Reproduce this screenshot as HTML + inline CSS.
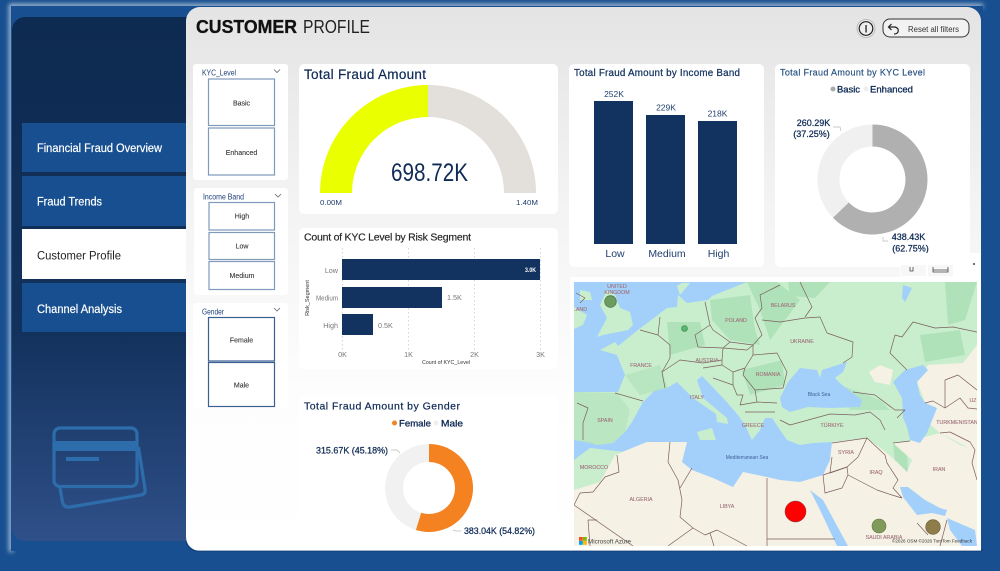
<!DOCTYPE html>
<html><head><meta charset="utf-8"><title>Customer Profile</title>
<style>html,body{margin:0;padding:0;background:#174f90;width:1000px;height:571px;overflow:hidden}svg{display:block}text{font-family:"Liberation Sans",sans-serif}</style></head>
<body>
<svg xmlns="http://www.w3.org/2000/svg" width="1000" height="571" viewBox="0 0 1000 571">
<defs>
<linearGradient id="side" x1="0" y1="0" x2="0" y2="1"><stop offset="0" stop-color="#0d2a50"/><stop offset=".6" stop-color="#12315c"/><stop offset="1" stop-color="#2f5089"/></linearGradient>
<linearGradient id="pan" x1="0" y1="0" x2="0" y2="1"><stop offset="0" stop-color="#e4e4e4"/><stop offset=".35" stop-color="#f3f3f3"/><stop offset=".7" stop-color="#fdfdfd"/><stop offset="1" stop-color="#fff"/></linearGradient>
<filter id="blur" x="-5%" y="-5%" width="110%" height="110%"><feGaussianBlur stdDeviation="2.500"/></filter>
<clipPath id="mc"><rect x="574" y="282" width="403" height="264"/></clipPath>
</defs>
<rect width="1000" height="571" fill="#174f90"/>
<path d="M11 552 V6 H983" fill="none" stroke="#b9c9dd" stroke-width="4" filter="url(#blur)"/>
<path d="M11 551.500 H983" fill="none" stroke="#c6d3e3" stroke-width="3" filter="url(#blur)"/>
<rect x="11" y="6" width="972" height="545" fill="#174f90"/>
<rect x="12" y="17" width="190" height="524" rx="13" fill="url(#side)"/>

<!-- nav -->
<rect x="22" y="123" width="165" height="49" fill="#174f90"/>
<rect x="22" y="176" width="165" height="50" fill="#174f90"/>
<rect x="22" y="229" width="165" height="50" fill="#fff"/>
<rect x="22" y="283" width="165" height="49" fill="#174f90"/>
<g font-size="11.500" fill="#fff" stroke="#fff" stroke-width=".2">
<text x="37" y="152" textLength="125" lengthAdjust="spacingAndGlyphs">Financial Fraud Overview</text>
<text x="37" y="205.500" textLength="65" lengthAdjust="spacingAndGlyphs">Fraud Trends</text>
<text x="37" y="313" textLength="85" lengthAdjust="spacingAndGlyphs">Channel Analysis</text>
</g>
<text x="37" y="259.500" font-size="11.500" fill="#222" textLength="84" lengthAdjust="spacingAndGlyphs">Customer Profile</text>

<!-- card icon -->
<g fill="none" stroke="#2e6dab" stroke-width="3.200">
<rect x="54" y="428" width="83" height="58.500" rx="6"/>
<path d="M60 488 L62.500 502 Q64 508 70 507 L141 495 Q146 494 145 489 L138.500 447"/>
</g>
<rect x="54" y="441" width="83" height="10" fill="#2e6dab"/>
<rect x="66" y="457" width="33" height="4" fill="#2e6dab"/>

<!-- main panel -->
<rect x="186" y="7" width="795" height="544" rx="14" fill="url(#pan)"/>
<text x="196" y="33" font-size="18" font-weight="700" fill="#111" stroke="#111" stroke-width=".3" textLength="101" lengthAdjust="spacingAndGlyphs">CUSTOMER</text>
<text x="303" y="33" font-size="18" fill="#222" textLength="67" lengthAdjust="spacingAndGlyphs">PROFILE</text>
<circle cx="866" cy="28.500" r="9" fill="#eee" stroke="#bbb" stroke-width="1"/>
<circle cx="866" cy="28.500" r="6.800" fill="none" stroke="#222" stroke-width="1.200"/>
<rect x="865.400" y="25" width="1.300" height="7.500" fill="#222"/>
<rect x="883" y="19" width="86" height="18" rx="7" fill="#f2f2f2" stroke="#333" stroke-width="1"/>
<path d="M889 27 L895 27 Q899 28 898 32 Q897 34 894 34 M891.500 24 L888.500 27 L891.500 30" fill="none" stroke="#222" stroke-width="1.200"/>
<text x="908" y="32" font-size="8" fill="#333" textLength="51" lengthAdjust="spacingAndGlyphs">Reset all filters</text>

<!-- slicers -->
<g fill="#fff">
<rect x="193" y="64" width="95" height="116" rx="3"/>
<rect x="194" y="188" width="94" height="107" rx="3"/>
<rect x="193" y="303" width="95" height="106" rx="3"/>
</g>
<g font-size="7.800" fill="#1d3f78">
<text x="202" y="75.500" textLength="34" lengthAdjust="spacingAndGlyphs">KYC_Level</text>
<text x="203" y="199.500" textLength="41" lengthAdjust="spacingAndGlyphs">Income Band</text>
<text x="202" y="314.500" textLength="22" lengthAdjust="spacingAndGlyphs">Gender</text>
</g>
<g fill="none" stroke="#667" stroke-width=".8">
<path d="M274 69.500 L277 72.500 L280 69.500"/><path d="M275 194 L278 197 L281 194"/><path d="M274 308 L277 311 L280 308"/>
</g>
<g fill="#fff" stroke="#7f9abb" stroke-width="1.200">
<rect x="208.500" y="79" width="66" height="46.500"/>
<rect x="208.500" y="128" width="66" height="47"/>
<rect x="209" y="202.500" width="65.500" height="27.500"/>
<rect x="209" y="232.500" width="65.500" height="27"/>
<rect x="209" y="261.500" width="65.500" height="28"/>
<rect x="208.500" y="317.500" width="66" height="43.500" stroke="#3b5f91"/>
<rect x="208.500" y="362.500" width="66" height="44" stroke="#3b5f91"/>
</g>
<g font-size="7" fill="#333" text-anchor="middle" stroke="#333" stroke-width=".1">
<text x="241.500" y="105.500">Basic</text>
<text x="241.500" y="155">Enhanced</text>
<text x="242" y="218.500">High</text>
<text x="242" y="248.500">Low</text>
<text x="242" y="278">Medium</text>
<text x="241.500" y="342.500">Female</text>
<text x="241.500" y="387.500">Male</text>
</g>

<!-- gauge -->
<rect x="299" y="64" width="259" height="150" rx="5" fill="#fff"/>
<text x="304" y="79" font-size="13.500" fill="#0f2a55" stroke="#0f2a55" stroke-width=".2" textLength="122" lengthAdjust="spacing">Total Fraud Amount</text>
<path d="M320 193 A108 108 0 0 1 428 85 L428 117 A76 76 0 0 0 352 193 Z" fill="#eaff00"/>
<path d="M428 85 A108 108 0 0 1 536 193 L504 193 A76 76 0 0 0 428 117 Z" fill="#e3dfda"/>
<text x="391" y="181" font-size="25" fill="#0f2a55" textLength="77" lengthAdjust="spacingAndGlyphs">698.72K</text>
<text x="320" y="205" font-size="7.500" fill="#1f3d6e" textLength="22" lengthAdjust="spacingAndGlyphs">0.00M</text>
<text x="516" y="205" font-size="7.500" fill="#1f3d6e" textLength="22" lengthAdjust="spacingAndGlyphs">1.40M</text>

<!-- risk chart -->
<rect x="299" y="228" width="259" height="141" rx="5" fill="#fff"/>
<text x="304" y="240.500" font-size="10.500" fill="#222" stroke="#222" stroke-width=".15" textLength="167" lengthAdjust="spacing">Count of KYC Level by Risk Segment</text>
<g stroke="#ccc" stroke-width=".8" stroke-dasharray="1.500 2.500"><path d="M342.500 248V350M408.500 248V350M474.500 248V350M540.500 248V350"/></g>
<g fill="#12335f">
<rect x="342" y="259" width="198" height="21"/>
<rect x="342" y="287" width="100" height="21"/>
<rect x="342" y="314" width="31" height="21"/>
</g>
<g font-size="7.200" fill="#777">
<text x="338" y="273" text-anchor="end">Low</text>
<text x="338" y="300.500" text-anchor="end" textLength="22" lengthAdjust="spacingAndGlyphs">Medium</text>
<text x="338" y="328" text-anchor="end">High</text>
<text x="447" y="300">1.5K</text>
<text x="378" y="328">0.5K</text>
<text x="342.500" y="357" text-anchor="middle">0K</text>
<text x="408.500" y="357" text-anchor="middle">1K</text>
<text x="474.500" y="357" text-anchor="middle">2K</text>
<text x="540.500" y="357" text-anchor="middle">3K</text>
</g>
<text x="525" y="272" font-size="6.500" font-weight="700" fill="#fff" textLength="11" lengthAdjust="spacingAndGlyphs">3.0K</text>
<text x="422" y="364" font-size="5.500" fill="#333" textLength="48" lengthAdjust="spacingAndGlyphs">Count of KYC_Level</text>
<text transform="translate(309 298) rotate(-90)" font-size="5.500" fill="#333" text-anchor="middle">Risk_Segment</text>

<!-- gender donut -->
<rect x="299" y="396" width="259" height="149" rx="5" fill="#fff"/>
<text x="304" y="409.500" font-size="10.500" fill="#0f2a55" stroke="#0f2a55" stroke-width=".2" textLength="156" lengthAdjust="spacing">Total Fraud Amount by Gender</text>
<circle cx="394.500" cy="423" r="2.500" fill="#f58220"/><circle cx="436" cy="423" r="2.500" fill="#efefef"/>
<text x="399" y="426.500" font-size="9.500" fill="#0f2a55" stroke="#0f2a55" stroke-width=".3" textLength="32" lengthAdjust="spacingAndGlyphs">Female</text>
<text x="441" y="426.500" font-size="9.500" fill="#0f2a55" stroke="#0f2a55" stroke-width=".3" textLength="22" lengthAdjust="spacingAndGlyphs">Male</text>
<circle cx="429" cy="488" r="35" fill="none" stroke="#f1f1f1" stroke-width="18"/>
<path d="M429 444 A44 44 0 1 1 415.900 530 L421.200 512.800 A26 26 0 1 0 429 462 Z" fill="#f58220"/>
<path d="M391 450 L397 450 L400 453 M453 530 L456 531 L461 531" fill="none" stroke="#bbb" stroke-width=".7"/>
<text x="316" y="453.500" font-size="9" fill="#0f2a55" stroke="#0f2a55" stroke-width=".25" textLength="72" lengthAdjust="spacingAndGlyphs">315.67K (45.18%)</text>
<text x="464" y="534" font-size="9" fill="#0f2a55" stroke="#0f2a55" stroke-width=".25" textLength="71" lengthAdjust="spacingAndGlyphs">383.04K (54.82%)</text>

<!-- income -->
<rect x="569" y="64" width="195" height="203" rx="5" fill="#fff"/>
<text x="574" y="76" font-size="9.800" fill="#163663" stroke="#163663" stroke-width=".25" textLength="166" lengthAdjust="spacing">Total Fraud Amount by Income Band</text>
<g fill="#12335f"><rect x="594" y="101" width="39" height="143"/><rect x="646" y="115" width="39" height="129"/><rect x="698" y="121" width="39" height="123"/></g>
<g font-size="8.500" fill="#22406e" text-anchor="middle"><text x="614" y="97">252K</text><text x="666" y="110.500">229K</text><text x="717.500" y="116.500">218K</text></g>
<g font-size="10.500" fill="#22406e" text-anchor="middle"><text x="615" y="257">Low</text><text x="667" y="257">Medium</text><text x="718.500" y="257">High</text></g>

<!-- kyc -->
<rect x="775" y="64" width="195" height="203" rx="5" fill="#fff"/>
<text x="780" y="75.500" font-size="9" fill="#2b5583" stroke="#2b5583" stroke-width=".2" textLength="145" lengthAdjust="spacing">Total Fraud Amount by KYC Level</text>
<circle cx="833" cy="89" r="2.500" fill="#aaa"/><circle cx="866" cy="89" r="2.500" fill="#eee"/>
<text x="837" y="92.500" font-size="9.500" fill="#0f2a55" stroke="#0f2a55" stroke-width=".3" textLength="23" lengthAdjust="spacingAndGlyphs">Basic</text>
<text x="870" y="92.500" font-size="9.500" fill="#0f2a55" stroke="#0f2a55" stroke-width=".3" textLength="43" lengthAdjust="spacingAndGlyphs">Enhanced</text>
<circle cx="872.500" cy="179.500" r="44" fill="none" stroke="#f0f0f0" stroke-width="22"/>
<path d="M872.500 124.500 A55 55 0 1 1 833 217.800 L848.800 202.500 A33 33 0 1 0 872.500 146.500 Z" fill="#b0b0b0"/>
<path d="M833 127 L840 127 L841 131 M883 237 L883 241 L888 241" fill="none" stroke="#bbb" stroke-width=".7"/>
<g font-size="9" fill="#0f2a55" stroke="#0f2a55" stroke-width=".25" text-anchor="middle">
<text x="813.500" y="126">260.29K</text><text x="811.500" y="137">(37.25%)</text>
<text x="908.500" y="240">438.43K</text><text x="910.500" y="251.500">(62.75%)</text>
</g>

<!-- artefact strip -->
<rect x="900" y="253" width="81" height="24" fill="#fff"/>
<rect x="901" y="265" width="25" height="11" fill="#f7f7f7"/>
<rect x="928" y="265" width="25" height="11" fill="#f7f7f7"/>
<path d="M910 267 V271 H913 V267" fill="none" stroke="#444" stroke-width=".8"/>
<path d="M933 267 V272 H948 V267 M933 270 H948" fill="none" stroke="#444" stroke-width=".8"/>
<circle cx="974" cy="264" r="1" fill="#444"/>

<!-- map -->
<rect x="570" y="277" width="411" height="274" fill="#fff"/>
<g clip-path="url(#mc)">
<rect x="574" y="282" width="403" height="264" fill="#a3d0fb"/>
<!-- green land -->
<g fill="#c9eecd">
<path d="M607 290 L615 295 L620 308 L630 312 L633 325 L628 330 L603 335 L597 337 L607 318 L600 305 Z"/>
<path d="M574 307 L587 315 L583 325 L574 329 Z"/>
<path d="M580 290 L590 292 L592 300 L580 300 Z"/>
<path d="M600 350 L615 342 L618 346 L638 330 L667 308 L677 307 L678 295 L687 303 L708 300 L712 296 L747 282 L977 282 L977 470 L890 470 L860 445 L832 442 L813 443 L800 445 L787 440 L780 430 L772 418 L765 418 L760 430 L752 440 L745 425 L738 415 L725 400 L702 376 L697 380 L703 398 L727 418 L728 424 L717 422 L716 414 L693 398 L677 382 L667 388 L655 390 L643 402 L632 422 L625 432 L613 443 L597 445 L590 442 L574 440 L574 392 L618 392 L625 375 L617 355 Z"/>
<path d="M574 460 L590 448 L625 452 L600 490 L574 490 Z"/>
<path d="M697 432 L712 428 L716 440 L700 440 Z"/>
<path d="M677 286 L682 283 L690 283 L680 295 Z"/>
</g>
<!-- darker patches -->
<g fill="#b0e2ba">
<path d="M574 392 L617 393 L630 410 L625 432 L613 443 L597 445 L574 440 Z" opacity=".6"/>
<path d="M710 300 L750 295 L755 330 L760 345 L730 340 L712 320 Z"/>
<path d="M667 322 L700 322 L705 345 L670 355 Z"/>
<path d="M625 375 L660 365 L668 388 L640 395 Z" opacity=".7"/>
<path d="M747 282 L777 282 L800 300 L770 340 L760 310 Z"/>
<path d="M788 282 L830 282 L815 298 L790 296 Z"/>
<path d="M742 370 L782 360 L785 385 L750 395 Z"/>
<path d="M920 335 L960 330 L965 355 L925 362 Z"/>
<path d="M945 282 L977 282 L965 320 L948 325 Z"/>
<path d="M840 385 L880 400 L890 410 L850 410 Z" opacity=".8"/>
<path d="M893 443 L907 450 L908 472 L895 462 Z"/>
</g>
<!-- arid -->
<g fill="#f5f1e4">
<path d="M574 490 L600 482 L615 455 L627 450 L647 442 L673 442 L687 442 L682 462 L692 470 L713 478 L733 487 L743 472 L767 477 L780 480 L800 482 L823 475 L830 460 L832 442 L850 440 L867 438 L883 450 L897 462 L907 472 L912 460 L893 443 L910 441 L940 433 L960 445 L977 450 L977 546 L574 546 Z"/>
<path d="M928 365 L963 363 L977 345 L977 452 L940 433 L925 420 L935 408 L925 402 L917 382 Z"/>
<path d="M869 372 L880 365 L893 370 L890 385 L875 382 Z"/>
</g>
<!-- water -->
<g fill="#a3d0fb">
<path d="M788 382 L800 368 L817 370 L820 378 L822 370 L847 362 L843 372 L835 378 L842 385 L862 400 L860 407 L830 408 L808 407 L790 412 L782 407 L780 398 Z"/>
<path d="M893 382 L905 370 L923 365 L928 370 L917 382 L920 395 L925 403 L937 408 L933 418 L927 433 L920 443 L910 440 L907 427 L903 418 L902 398 Z"/>
<path d="M810 490 L823 500 L848 546 L837 546 L820 510 Z"/>
<path d="M900 487 L908 487 L925 500 L940 508 L947 510 L945 516 L932 513 L917 515 L903 497 Z"/>
<path d="M947 518 L975 530 L977 546 L962 546 L950 530 Z"/>
<path d="M903 285 L912 288 L905 302 L902 298 Z"/>
</g>
<!-- borders -->
<g fill="none" stroke="#7b5e5e" stroke-width=".7" stroke-linejoin="round">
<path d="M640 330 L658 335 L670 345 L670 358 L662 372 L665 388"/>
<path d="M660 317 L658 335"/>
<path d="M662 372 L680 360 L703 363 L722 360 L723 348"/>
<path d="M705 302 L710 325 L695 335 L698 347 L723 348 L730 342 L713 330 L710 325"/>
<path d="M730 342 L753 345 L762 335 L755 318 L762 308 L760 295"/>
<path d="M723 348 L747 350 L753 345 L753 355 L745 368 L733 372 L722 365 L722 360"/>
<path d="M753 355 L777 353 L787 372 L783 388 L755 390 L743 375 L745 368"/>
<path d="M703 368 L722 365 M713 378 L733 385 L737 395 L743 395 L740 405 L757 402 L755 390 M733 372 L733 385 M757 402 L777 403"/>
<path d="M745 412 L760 412 L775 412"/>
<path d="M762 320 L780 322 L805 318 L820 317 L827 333 L853 342 L852 357 L843 363"/>
<path d="M800 282 L812 307 L805 317"/>
<path d="M760 295 L780 285"/>
<path d="M907 370 L892 355 L890 353 L895 335 L902 337 L913 322 L935 328 L953 327 L977 332"/>
<path d="M853 392 L875 395 L895 410 L905 410 L897 418"/>
<path d="M780 420 L790 425 L830 414 L855 415 L870 412 L880 420 L885 430"/>
<path d="M615 393 L643 401"/><path d="M577 403 L588 408 L583 423 L583 440"/>
<path d="M576 293 L585 298 L580 303"/>
<path d="M617 455 L619 472 L605 477 L593 492 L580 493 L574 505 L633 546"/>
<path d="M670 442 L668 462 L678 480 L682 500 L680 517 L693 528 L705 535 L717 530 L747 546"/>
<path d="M692 468 L683 483 L680 488"/>
<path d="M693 528 L668 546 M710 533 L714 546"/>
<path d="M588 520 L597 520 M588 520 L590 546"/>
<path d="M767 478 L767 546 M767 539 L835 539"/>
<path d="M832 443 L867 438 L858 457 L847 467 L830 473 L832 457"/>
<path d="M823 475 L847 467 L848 475 L877 490 L892 495 L902 498"/>
<path d="M867 438 L885 455 L887 463 L898 480 L893 488 L902 498"/>
<path d="M848 475 L842 488 L825 493 L823 475"/>
<path d="M893 443 L910 441 M940 433 L950 432 L970 442 L975 450 L972 463 L977 480"/>
<path d="M947 520 L940 546 M917 523 L928 535"/>
<path d="M945 380 L945 408 L960 398 L968 408 L977 409 M945 380 L958 375 L977 390 M925 403 L933 401 L945 408"/>
</g>
<!-- labels -->
<g font-size="5.300" fill="#a0727c" text-anchor="middle" stroke="#a0727c" stroke-width=".12">
<text x="617" y="288">UNITED</text><text x="617" y="294">KINGDOM</text>
<text x="580" y="311">LAND</text>
<text x="641" y="367">FRANCE</text>
<text x="736" y="322">POLAND</text>
<text x="783" y="307">BELARUS</text>
<text x="802" y="343">UKRAINE</text>
<text x="707" y="362">AUSTRIA</text>
<text x="768" y="376">ROMANIA</text>
<text x="697" y="399">ITALY</text>
<text x="605" y="422">SPAIN</text>
<text x="753" y="427">GREECE</text>
<text x="594" y="469">MOROCCO</text>
<text x="641" y="501">ALGERIA</text>
<text x="727" y="508">LIBYA</text>
<text x="832" y="427">TÜRKIYE</text>
<text x="846" y="454">SYRIA</text>
<text x="876" y="474">IRAQ</text>
<text x="939" y="471">IRAN</text>
<text x="957" y="424">TURKMENISTAN</text>
<text x="973" y="402">UZ</text>
<text x="884" y="539">SAUDI ARABIA</text>
</g>
<g font-size="5" fill="#3c5f94" text-anchor="middle">
<text x="819" y="396">Black Sea</text>
<text x="747" y="459">Mediterranean Sea</text>
</g>
<!-- bubbles -->
<circle cx="610.500" cy="301.500" r="5.800" fill="#6c9c60" stroke="#4d7a48" stroke-width=".8"/>
<circle cx="684.500" cy="328.500" r="3" fill="#55b56c" stroke="#3f8a50" stroke-width=".6"/>
<circle cx="795.500" cy="511.500" r="10.500" fill="#ff0000" stroke="#7a3a3a" stroke-width=".5"/>
<circle cx="879" cy="526" r="7" fill="#7f9a5a" stroke="#5f7440" stroke-width=".6"/>
<circle cx="933" cy="527" r="7.300" fill="#8f7c4b" stroke="#6a5a34" stroke-width=".6"/>
<!-- logo -->
<rect x="579" y="537" width="3.800" height="3.800" fill="#f25022"/><rect x="583" y="537" width="3.800" height="3.800" fill="#7fba00"/>
<rect x="579" y="541" width="3.800" height="3.800" fill="#00a4ef"/><rect x="583" y="541" width="3.800" height="3.800" fill="#ffb900"/>
<text x="588" y="543.500" font-size="6" fill="#444" textLength="43" lengthAdjust="spacingAndGlyphs">Microsoft Azure</text>
<text x="892" y="542.500" font-size="4.800" fill="#333" textLength="80" lengthAdjust="spacingAndGlyphs">©2026 OSM ©2026 TomTom Feedback</text>
</g>
<path d="M186 541 Q188 551 198 551 L981 551 L983 549" fill="none" stroke="#123a70" stroke-width=".8"/>
</svg>
</body></html>
